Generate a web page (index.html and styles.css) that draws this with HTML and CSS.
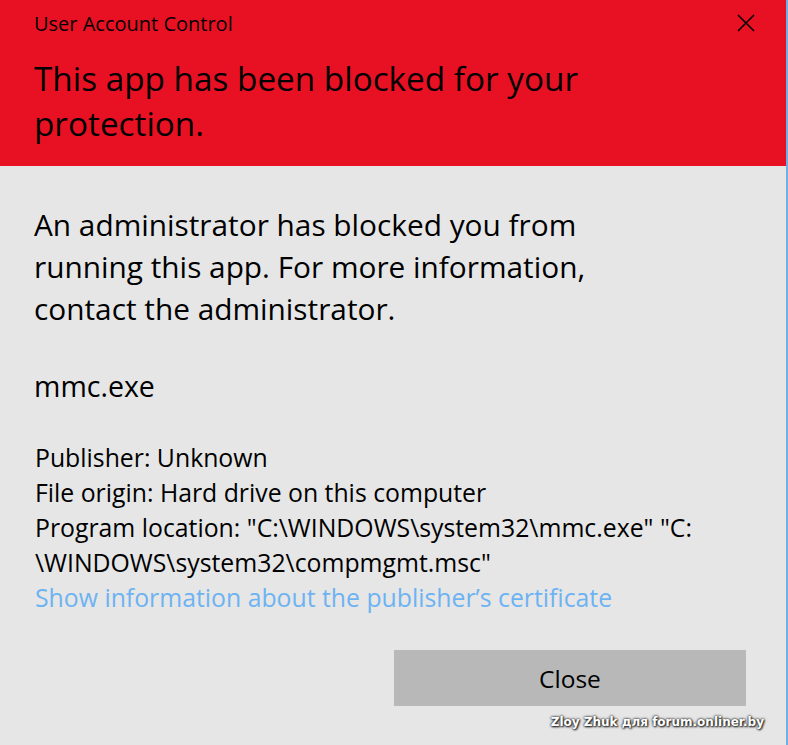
FILE: index.html
```html
<!DOCTYPE html>
<html>
<head>
  <title>User Account Control</title>
  <link rel="stylesheet" href="styles.css">
</head>
<body>
  <div class="dialog">
    <div class="banner">
      <div class="titlebar">
        <span class="title">User Account Control</span>
        <svg class="close-x" width="18" height="18" viewBox="0 0 18 18">
          <path d="M1 1 L17 17 M17 1 L1 17" stroke="#000" stroke-width="1.6" fill="none"/>
        </svg>
      </div>
      <h1>This app has been blocked for your protection.</h1>
    </div>
    <div class="content">
      <p class="message">An administrator has blocked you from running this app. For more information, contact the administrator.</p>
      <p class="app-name">mmc.exe</p>
      <div class="details">
        <div>Publisher: Unknown</div>
        <div>File origin: Hard drive on this computer</div>
        <div>Program location: "C:\WINDOWS\system32\mmc.exe" "C:<br>\WINDOWS\system32\compmgmt.msc"</div>
        <a class="cert-link" href="#">Show information about the publisher’s certificate</a>
      </div>
      <div class="actions">
        <button type="button">Close</button>
      </div>
    </div>
    <div class="watermark">Zloy Zhuk для forum.onliner.by</div>
  </div>
</body>
</html>
```
FILE: styles.css
```css
html, body {
  margin: 0;
  height: 100%;
  background: #e6e6e6;
  font-family: 'Open Sans', 'Noto Sans', sans-serif;
  color: #000;
}
.dialog {
  position: relative;
  height: 745px;
  width: 786px;
  border-right: 2px solid #6cb0e6;
  box-sizing: content-box;
}
.banner {
  background: #e81123;
  height: 166px;
  padding: 0 31px 0 34px;
  box-sizing: border-box;
}
.titlebar {
  display: flex;
  justify-content: space-between;
  align-items: center;
  height: 46px;
}
.title {
  font-size: 20px;
}
.close-x {
  margin-top: -1px;
}
h1 {
  font-weight: normal;
  font-size: 33.3px;
  line-height: 45px;
  margin: 10px 0 0;
  width: 600px;
}
.content {
  padding: 0 0 0 34px;
}
.message {
  font-size: 29.8px;
  line-height: 42px;
  margin: 38px 0 0;
  width: 600px;
}
.app-name {
  font-size: 28.5px;
  line-height: 40px;
  margin: 36px 0 0;
}
.details {
  margin-top: 34px;
  font-size: 24.8px;
  line-height: 35px;
  padding-left: 1px;
}
.cert-link {
  color: #6db3f2;
  text-decoration: none;
}
.actions {
  display: flex;
  justify-content: flex-end;
  padding-right: 40px;
  margin-top: 35px;
}
button {
  width: 352px;
  height: 56px;
  border: none;
  background: #b8b8b8;
  font-family: inherit;
  font-size: 24.5px;
  color: #000;
}
.watermark {
  position: absolute;
  right: 22px;
  top: 715px;
  font-family: 'DejaVu Sans', sans-serif;
  font-weight: bold;
  font-size: 12px;
  color: #fff;
  text-shadow: 0 0 2px #222, 1px 1px 2px #222, 0 0 3px #444;
}
```
